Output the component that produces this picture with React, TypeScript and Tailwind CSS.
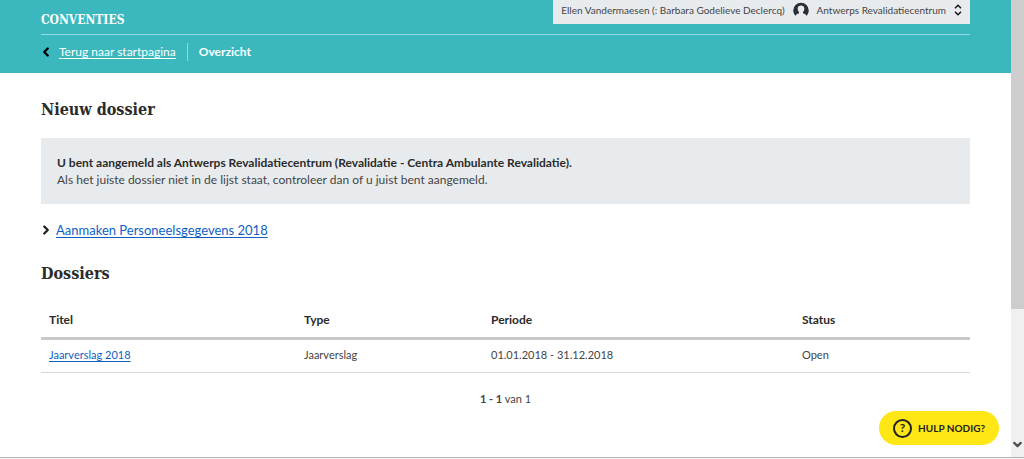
import { ChevronDown, ChevronLeft, ChevronRight } from "lucide-react";

interface Dossier {
  title: string;
  type: string;
  period: string;
  status: string;
}

const dossiers: Dossier[] = [
  {
    title: "Jaarverslag 2018",
    type: "Jaarverslag",
    period: "01.01.2018 - 31.12.2018",
    status: "Open",
  },
];

function UserIcon() {
  return (
    <svg viewBox="0 0 16 16" className="h-4 w-4 shrink-0" aria-hidden="true">
      <path
        d="M2.4 14A7.8 7.8 0 1 1 13.6 14C13.2 12.2 11.6 11.8 10 11.2V10C11 9 11.3 7.6 11.3 6.4C11.3 4.4 10 3.4 8 3.4S4.7 4.4 4.7 6.4C4.7 7.6 5 9 6 10V11.2C4.4 11.8 2.8 12.2 2.4 14Z"
        fill="#2b2f33"
      />
    </svg>
  );
}

function SwitchIcon() {
  return (
    <svg
      viewBox="0 0 8 12"
      className="h-3 w-2 shrink-0"
      fill="none"
      stroke="#111"
      strokeWidth="1.4"
      aria-hidden="true"
    >
      <path d="M1 4.2L4 1.2L7 4.2M1 7.8L4 10.8L7 7.8" />
    </svg>
  );
}

function Header() {
  return (
    <header className="bg-[#3ab8be] px-[41px] text-white">
      <div className="flex h-[35px] items-start justify-between border-b border-[#93d8dc]">
        <h1 className="pt-3 font-['DejaVu_Serif_Condensed','DejaVu_Serif',serif] text-xs leading-4 font-bold">
          CONVENTIES
        </h1>
        <button
          type="button"
          className="flex h-6 items-center gap-2 bg-[#e8ebee] px-2 pb-1 text-[10px] text-[#444]"
        >
          <span>Ellen Vandermaesen (: Barbara Godelieve Declercq)</span>
          <UserIcon />
          <span>Antwerps Revalidatiecentrum</span>
          <SwitchIcon />
        </button>
      </div>
      <nav className="flex h-[38px] items-center pb-1 text-xs">
        <ChevronLeft className="mr-1.5 -ml-0.5 h-3.5 w-3.5 text-black" strokeWidth={4} />
        <a href="#" className="underline underline-offset-2">
          Terug naar startpagina
        </a>
        <span className="mx-[11px] h-[18px] w-px bg-[#93d8dc]" />
        <span className="font-bold">Overzicht</span>
      </nav>
    </header>
  );
}

function DossierTable() {
  return (
    <table className="mt-4 w-full table-fixed text-left text-[11px]">
      <thead>
        <tr className="h-9 border-b-[3px] border-[#c9c9c9] text-xs text-[#2b2b2b]">
          <th className="w-[255px] px-2 pt-0.5">Titel</th>
          <th className="w-[187px] px-2 pt-0.5">Type</th>
          <th className="w-[311px] px-2 pt-0.5">Periode</th>
          <th className="px-2 pt-0.5">Status</th>
        </tr>
      </thead>
      <tbody>
        {dossiers.map((dossier) => (
          <tr key={dossier.title} className="h-[34px] border-b border-[#d6d6d6]">
            <td className="px-2">
              <a href="#" className="text-[#0f5fc2] underline underline-offset-2">
                {dossier.title}
              </a>
            </td>
            <td className="px-2">{dossier.type}</td>
            <td className="px-2">{dossier.period}</td>
            <td className="px-2">{dossier.status}</td>
          </tr>
        ))}
      </tbody>
    </table>
  );
}

export default function App() {
  return (
    <div className="flex min-h-screen flex-col bg-[#f6f6f6] font-['Lato',sans-serif] text-[#444]">
      <div className="flex flex-1 border-b border-[#b4b4b4] bg-white">
        <div className="min-w-0 flex-1">
          <Header />
          <main className="px-[41px] pt-[25px]">
            <h2 className="font-['DejaVu_Serif_Condensed','DejaVu_Serif',serif] text-base leading-6 font-bold text-[#2b2b2b]">
              Nieuw dossier
            </h2>
            <div className="mt-4 bg-[#e8ebee] px-4 py-4 text-xs leading-[17px]">
              <p className="font-bold text-[#2b2b2b]">
                U bent aangemeld als Antwerps Revalidatiecentrum (Revalidatie - Centra Ambulante
                Revalidatie).
              </p>
              <p>Als het juiste dossier niet in de lijst staat, controleer dan of u juist bent aangemeld.</p>
            </div>
            <div className="mt-4 flex items-center gap-[3px] text-[13px] leading-5">
              <ChevronRight className="-ml-0.5 h-3.5 w-3.5 text-[#222]" strokeWidth={4} />
              <a href="#" className="text-[#0f5fc2] underline underline-offset-2">
                Aanmaken Personeelsgegevens 2018
              </a>
            </div>
            <h2 className="mt-[22px] font-['DejaVu_Serif_Condensed','DejaVu_Serif',serif] text-base leading-6 font-bold text-[#2b2b2b]">
              Dossiers
            </h2>
            <DossierTable />
            <p className="mt-4 text-center text-[11px] leading-5">
              <strong>1 - 1</strong> van 1
            </p>
          </main>
        </div>
        <aside className="flex w-[13px] flex-col justify-between bg-[#f0f0f0]" aria-hidden="true">
          <div className="h-[309px] bg-[#cdcdcd]" />
          <ChevronDown className="mb-1.5 h-[13px] w-[13px] text-[#505050]" strokeWidth={4} />
        </aside>
      </div>
      <div className="h-px" />
      <button
        type="button"
        className="fixed right-[25px] bottom-3.5 flex h-[34px] items-center gap-1.5 rounded-full bg-[#ffe615] px-3.5 text-[10px] font-bold text-[#222]"
      >
        <span className="flex h-[19px] w-[19px] items-center justify-center rounded-full border-2 border-[#222] text-xs">
          ?
        </span>
        HULP NODIG?
      </button>
    </div>
  );
}
